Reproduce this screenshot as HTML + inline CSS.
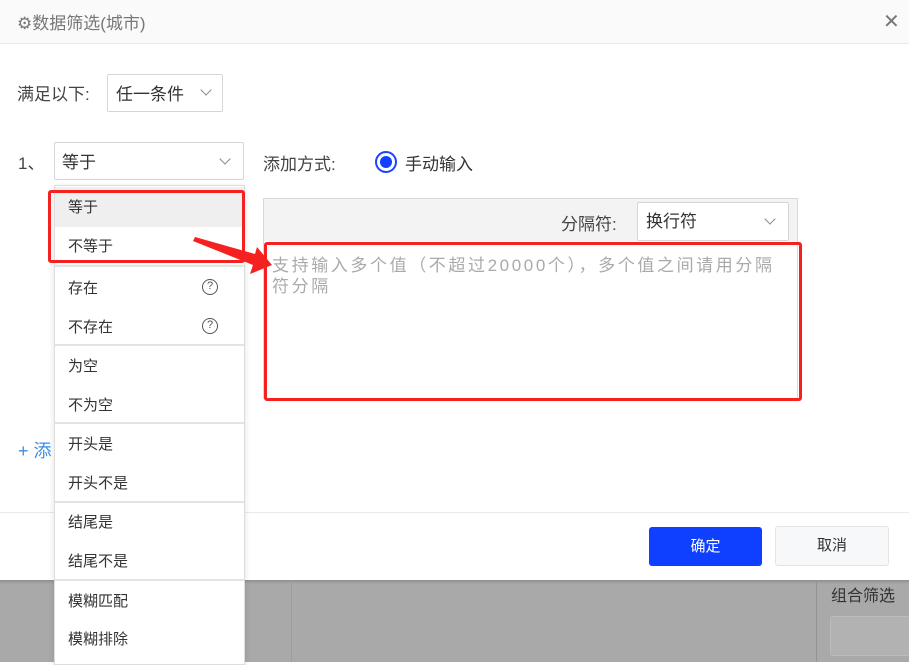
<!DOCTYPE html>
<html><head><meta charset="utf-8"><style>
*{margin:0;padding:0;box-sizing:border-box}
body{width:909px;height:662px;overflow:hidden;position:relative;background:#fff;font-family:"Liberation Sans","Noto Sans CJK SC",sans-serif;color:#333}
.a{position:absolute;white-space:nowrap}
.sel{position:absolute;border:1px solid #d6d6d6;background:#fff;border-radius:2px}
.chev{position:absolute;width:8px;height:8px;border-right:1.3px solid #888;border-bottom:1.3px solid #888;transform:rotate(45deg)}
.it{position:absolute;left:68px;font-size:15px;color:#333}
.dv{position:absolute;left:55px;width:189px;height:2px;background:#e3e3e3}
.q{position:absolute;left:202px;width:16px;height:16px;border:1.3px solid #555;border-radius:50%;font-size:11px;text-align:center;line-height:13px;color:#555}
</style></head><body>
<div class="a" style="left:0;top:0;width:909px;height:44px;background:#fafafa;border-bottom:1px solid #eaeaea"></div>
<div class="a" style="left:17px;top:9px;font-size:17px;color:#777">⚙数据筛选(城市)</div>
<div class="a" style="left:883px;top:9px;font-size:20px;color:#777">✕</div>

<div class="a" style="left:17px;top:80px;font-size:17px;color:#444">满足以下:</div>
<div class="sel" style="left:107px;top:74px;width:116px;height:38px"></div>
<div class="a" style="left:116px;top:80px;font-size:17px;color:#333">任一条件</div>
<div class="chev" style="left:202px;top:86px"></div>

<div class="a" style="left:18px;top:149px;font-size:17px;color:#444">1、</div>
<div class="sel" style="left:54px;top:142px;width:190px;height:38px"></div>
<div class="a" style="left:62px;top:148px;font-size:17px">等于</div>
<div class="chev" style="left:221px;top:155px"></div>

<div class="a" style="left:263px;top:150px;font-size:17px;color:#444">添加方式:</div>
<div class="a" style="left:375px;top:151px;width:22px;height:22px;border-radius:50%;border:2px solid #1a45ff;background:#fff"></div>
<div class="a" style="left:380px;top:156px;width:12px;height:12px;border-radius:50%;background:#1040ff"></div>
<div class="a" style="left:405px;top:150px;font-size:17px;color:#333">手动输入</div>

<div class="a" style="left:263px;top:198px;width:535px;height:201px;border:1px solid #d8d8d8;background:#fff"></div>
<div class="a" style="left:264px;top:199px;width:533px;height:42px;background:#f3f3f3"></div>
<div class="a" style="left:561px;top:210px;font-size:17px;color:#444">分隔符:</div>
<div class="sel" style="left:637px;top:202px;width:152px;height:39px"></div>
<div class="a" style="left:646px;top:207px;font-size:17px">换行符</div>
<div class="chev" style="left:766px;top:215px"></div>
<div class="a" style="left:264px;top:242px;width:538px;height:159px;border:3px solid #f52020;border-radius:3px"></div>
<div class="a" style="left:272px;top:255px;font-size:17px;letter-spacing:2.6px;color:#aaa;line-height:21px;white-space:nowrap">支持输入多个值（不超过20000个），多个值之间请用分隔<br>符分隔</div>

<div class="a" style="left:18px;top:437px;font-size:18px;color:#3b8ee8">+ 添</div>

<div class="a" style="left:0;top:512px;width:909px;height:68px;border-top:1px solid #eaeaea;background:#fff"></div>
<div class="a" style="left:649px;top:527px;width:113px;height:39px;background:#1040ff;border-radius:3px;color:#fff;font-size:15px;text-align:center;line-height:39px">确定</div>
<div class="a" style="left:775px;top:526px;width:114px;height:40px;background:#f7f8fa;border:1px solid #e3e3e3;border-radius:3px;color:#333;font-size:15px;text-align:center;line-height:38px">取消</div>

<div class="a" style="left:0;top:580px;width:909px;height:82px;background:#a9a9a9"></div>
<div class="a" style="left:0;top:580px;width:909px;height:4px;background:linear-gradient(#8f8f8f,#a9a9a9)"></div>
<div class="a" style="left:816px;top:580px;width:1px;height:82px;background:#949494"></div>
<div class="a" style="left:291px;top:580px;width:1px;height:82px;background:#9d9d9d"></div>
<div class="a" style="left:831px;top:582px;font-size:16px;color:#333">组合筛选</div>
<div class="a" style="left:830px;top:616px;width:85px;height:40px;background:#b2b2b2;border:1px solid #bcbcbc;border-radius:3px"></div>

<div class="a" style="left:54px;top:185px;width:191px;height:480px;background:#fff;border:1px solid #ddd;box-shadow:0 2px 6px rgba(0,0,0,.12)"></div>
<div class="a" style="left:55px;top:187px;width:189px;height:40px;background:#efefef"></div>
<div class="it" style="top:196px">等于</div>
<div class="it" style="top:235px">不等于</div>
<div class="dv" style="top:265px"></div>
<div class="it" style="top:277px">存在</div><div class="q" style="top:279px">?</div>
<div class="it" style="top:316px">不存在</div><div class="q" style="top:318px">?</div>
<div class="dv" style="top:344px"></div>
<div class="it" style="top:355px">为空</div>
<div class="it" style="top:394px">不为空</div>
<div class="dv" style="top:422px"></div>
<div class="it" style="top:433px">开头是</div>
<div class="it" style="top:472px">开头不是</div>
<div class="dv" style="top:501px"></div>
<div class="it" style="top:511px">结尾是</div>
<div class="it" style="top:550px">结尾不是</div>
<div class="dv" style="top:579px"></div>
<div class="it" style="top:590px">模糊匹配</div>
<div class="it" style="top:628px">模糊排除</div>

<div class="a" style="left:48px;top:190px;width:197px;height:73px;border:3px solid #f52020;border-radius:3px"></div>
<svg class="a" style="left:190px;top:232px" width="90" height="45"><polygon points="5,5 65,22 67,15 82,33 60,42 63,33 3,9" fill="#f52020"/></svg>
</body></html>
